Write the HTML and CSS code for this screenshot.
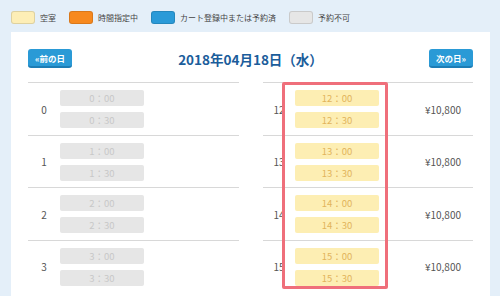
FILE: index.html
```html
<!DOCTYPE html>
<html lang="ja">
<head>
    <meta charset="UTF-8">
    <meta name="viewport" content="width=device-width, initial-scale=1.0">
    <title>予約カレンダー</title>
    <link rel="stylesheet" href="styles.css">
</head>
<body>
    <div class="legend">
        <span class="swatch swatch-free"></span><span class="legend-label">空室</span>
        <span class="swatch swatch-timed"></span><span class="legend-label">時間指定中</span>
        <span class="swatch swatch-cart"></span><span class="legend-label">カート登録中または予約済</span>
        <span class="swatch swatch-closed"></span><span class="legend-label">予約不可</span>
    </div>

    <div class="panel">
        <div class="day-header">
            <button class="day-btn">&laquo;前の日</button>
            <h2 class="day-title">2018年04月18日（水）</h2>
            <button class="day-btn">次の日&raquo;</button>
        </div>

        <div class="columns">
            <div class="column">
                <div class="row">
                    <div class="hour">0</div>
                    <div class="slots">
                        <div class="slot slot-closed">0：00</div>
                        <div class="slot slot-closed">0：30</div>
                    </div>
                    <div class="price"></div>
                </div>
                <div class="row">
                    <div class="hour">1</div>
                    <div class="slots">
                        <div class="slot slot-closed">1：00</div>
                        <div class="slot slot-closed">1：30</div>
                    </div>
                    <div class="price"></div>
                </div>
                <div class="row">
                    <div class="hour">2</div>
                    <div class="slots">
                        <div class="slot slot-closed">2：00</div>
                        <div class="slot slot-closed">2：30</div>
                    </div>
                    <div class="price"></div>
                </div>
                <div class="row">
                    <div class="hour">3</div>
                    <div class="slots">
                        <div class="slot slot-closed">3：00</div>
                        <div class="slot slot-closed">3：30</div>
                    </div>
                    <div class="price"></div>
                </div>
            </div>

            <div class="column">
                <div class="highlight"></div>
                <div class="row">
                    <div class="hour">12</div>
                    <div class="slots">
                        <div class="slot slot-free">12：00</div>
                        <div class="slot slot-free">12：30</div>
                    </div>
                    <div class="price">¥10,800</div>
                </div>
                <div class="row">
                    <div class="hour">13</div>
                    <div class="slots">
                        <div class="slot slot-free">13：00</div>
                        <div class="slot slot-free">13：30</div>
                    </div>
                    <div class="price">¥10,800</div>
                </div>
                <div class="row">
                    <div class="hour">14</div>
                    <div class="slots">
                        <div class="slot slot-free">14：00</div>
                        <div class="slot slot-free">14：30</div>
                    </div>
                    <div class="price">¥10,800</div>
                </div>
                <div class="row">
                    <div class="hour">15</div>
                    <div class="slots">
                        <div class="slot slot-free">15：00</div>
                        <div class="slot slot-free">15：30</div>
                    </div>
                    <div class="price">¥10,800</div>
                </div>
            </div>
        </div>
    </div>
</body>
</html>
```

FILE: styles.css
```css
body {
    margin: 0;
    height: 296px;
    overflow: hidden;
    background: #e4eff9;
    font-family: "Noto Sans CJK JP", sans-serif;
    color: #555;
}

.legend {
    display: flex;
    align-items: center;
    height: 13px;
    padding: 11px 0 0 11px;
}

.swatch {
    box-sizing: border-box;
    width: 24px;
    height: 13px;
    border-radius: 3px;
    border: 1px solid rgba(0, 0, 0, 0.12);
}

.swatch-free { background: #fdeeb6; }
.swatch-timed { background: #f7891e; }
.swatch-cart { background: #2a9ad8; }
.swatch-closed { background: #e6e6e6; }

.legend-label {
    font-size: 8px;
    margin: 0 13px 0 5px;
    color: #444;
}

.panel {
    margin: 8px 10px 0 11px;
    background: #fff;
    padding: 17px 17px 0;
    height: 247px;
    overflow: hidden;
}

.day-header {
    display: flex;
    justify-content: space-between;
    align-items: center;
    height: 19px;
    margin-bottom: 14px;
}

.day-btn {
    box-sizing: border-box;
    width: 44px;
    height: 19px;
    padding: 0;
    background: #2a9ad6;
    color: #fff;
    border: none;
    border-bottom: 2px solid #1d7db5;
    border-radius: 3px;
    font-family: inherit;
    font-size: 8.5px;
    font-weight: bold;
}

.day-title {
    margin: 0;
    font-size: 13.5px;
    font-weight: bold;
    color: #1b5d9b;
}

.columns {
    display: grid;
    grid-template-columns: 211px 210px;
    column-gap: 24px;
}

.column {
    position: relative;
}

.row {
    display: flex;
    align-items: center;
    border-top: 1px solid #d8d8d8;
    padding: 7px 0 6.5px;
}

.hour {
    width: 32px;
    text-align: center;
    font-size: 10px;
    color: #555;
}

.slots {
    display: flex;
    flex-direction: column;
    gap: 6px;
    width: 84px;
}

.slot {
    height: 16px;
    line-height: 16px;
    border-radius: 2px;
    text-align: center;
    font-size: 9.5px;
}

.slot-closed {
    background: #e6e6e6;
    color: #c8c8c8;
}

.slot-free {
    background: #fdeeb3;
    color: #e2b45c;
}

.price {
    flex: 1;
    text-align: right;
    padding-right: 12px;
    font-size: 10px;
    color: #555;
}

.highlight {
    position: absolute;
    left: 19px;
    top: 0;
    width: 106px;
    height: 207px;
    box-sizing: border-box;
    border: 3px solid #ef6f7b;
    border-radius: 2px;
    z-index: 1;
}
```
